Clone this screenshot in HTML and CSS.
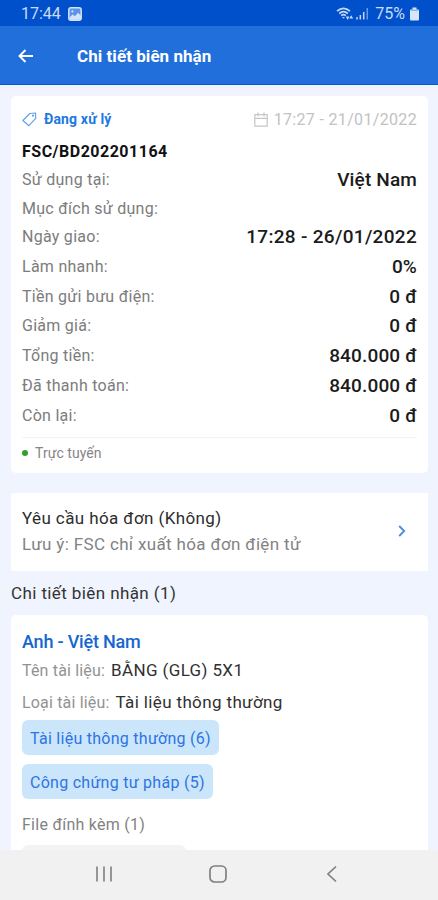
FILE: index.html
```html
<!DOCTYPE html>
<html lang="vi">

<head>
    <meta charset="UTF-8">
    <meta name="viewport" content="width=device-width, initial-scale=1.0">
    <title>Chi tiết biên nhận</title>
    <link rel="stylesheet" href="styles.css">
</head>

<body>
    <div class="screen">
        <div class="statusbar">
            <span class="time">17:44</span>
            <svg class="picture" width="14" height="14" viewBox="0 0 14 14">
                <rect x="0.8" y="0.8" width="12.4" height="12.4" rx="2.2" fill="#5f93e6" stroke="#d3e3fb" stroke-width="1.5" />
                <path d="M1.5 10.5l3.2-3 2.2 1.8 3.2-3.6 3 3.2v2.8q0 1-1 1h-9.6q-1 0-1-1z" fill="#d3e3fb" />
                <circle cx="4.4" cy="4.4" r="1.1" fill="#d3e3fb" />
            </svg>
            <svg class="wifi" width="18" height="14" viewBox="0 0 18 14">
                <g fill="none" stroke="#c3d8f8" stroke-width="1.7">
                    <path d="M1 4.2Q7.5-1.6 14 4.2" />
                    <path d="M3.2 6.5Q7.5 2.8 11.8 6.5" />
                    <path d="M5.2 8.6Q7.5 6.6 9.8 8.6" />
                </g>
                <path d="M6 10l1.5 1.6L9 10zM9.8 9.6h3.6L11.6 13zM13.2 11.500h4L15.200 8.200z" fill="#c3d8f8" />
            </svg>
            <svg class="signal" width="13" height="13" viewBox="0 0 13 13">
                <path d="M1 10v2.5M4.3 8v4.5M7.7 5v7.5" stroke="#c3d8f8" stroke-width="1.5" />
                <path d="M11.3 1v11.5" stroke="#6d9be8" stroke-width="1.5" />
            </svg>
            <span class="percent">75%</span>
            <svg class="battery" width="9" height="14" viewBox="0 0 9 14">
                <path d="M2.5 0.5h4v2H8q1 0 1 1V12.5q0 1-1 1H1q-1 0-1-1V3.500q0-1 1-1h1.500z" fill="#d8e6fc" />
                <path d="M1 2.500h7v1.500H1z" fill="#8fb2ee" />
            </svg>
        </div>

        <div class="header">
            <svg width="16" height="14" viewBox="0 0 16 14">
                <path d="M15 7H2M7.500 1L1.500 7l6 6" fill="none" stroke="#fff" stroke-width="1.900" />
            </svg>
            <h1>Chi tiết biên nhận</h1>
        </div>

        <div class="content">
            <div class="card receipt">
                <div class="top">
                    <svg width="15" height="15" viewBox="0 0 15 15">
                        <path d="M7.800 1.500L13.500 1l.2 5.300-6.800 7.400L.9 8.500z" fill="none" stroke="#65a2e6" stroke-width="1.200" stroke-linejoin="round" />
                        <circle cx="11" cy="3.700" r="1.100" fill="#65a2e6" />
                    </svg>
                    <span class="status">Đang xử lý</span>
                    <svg class="calendar" width="14" height="15" viewBox="0 0 14 15">
                        <path d="M.8 2.700h12.400v11.500H.8zM.8 6.300h12.400M4 .5v4M10 .5v4" fill="none" stroke="#c6c6c6" stroke-width="1.200" />
                    </svg>
                    <span class="date">17:27 - 21/01/2022</span>
                </div>
                <div class="code">FSC/BD202201164</div>
                <div class="row short"><span>Sử dụng tại:</span><b>Việt Nam</b></div>
                <div class="row short"><span>Mục đích sử dụng:</span></div>
                <div class="row"><span>Ngày giao:</span><b class="numbers">17:28 - 26/01/2022</b></div>
                <div class="row"><span>Làm nhanh:</span><b>0%</b></div>
                <div class="row"><span>Tiền gửi bưu điện:</span><b>0 đ</b></div>
                <div class="row"><span>Giảm giá:</span><b>0 đ</b></div>
                <div class="row"><span>Tổng tiền:</span><b>840.000 đ</b></div>
                <div class="row"><span>Đã thanh toán:</span><b>840.000 đ</b></div>
                <div class="row"><span>Còn lại:</span><b>0 đ</b></div>
                <div class="online"><i class="dot"></i>Trực tuyến</div>
            </div>

            <div class="card invoice">
                <div>
                    <div class="invoice-title">Yêu cầu hóa đơn (Không)</div>
                    <div class="invoice-note">Lưu ý: FSC chỉ xuất hóa đơn điện tử</div>
                </div>
                <svg width="8" height="12" viewBox="0 0 8 12">
                    <path d="M1.200 1l5 5-5 5" fill="none" stroke="#4a8ae0" stroke-width="1.800" />
                </svg>
            </div>

            <h2>Chi tiết biên nhận (1)</h2>

            <div class="card document">
                <div class="doc-title">Anh - Việt Nam</div>
                <div class="doc-line"><span>Tên tài liệu:</span><b>BẰNG (GLG) 5X1</b></div>
                <div class="doc-line"><span>Loại tài liệu:</span><b>Tài liệu thông thường</b></div>
                <div class="tag">Tài liệu thông thường (6)</div>
                <div class="tag">Công chứng tư pháp (5)</div>
                <div class="attach">File đính kèm (1)</div>
                <div class="file"></div>
            </div>
        </div>

        <div class="navbar">
            <svg width="18" height="18" viewBox="0 0 18 18">
                <path d="M2 1.500v15M9 1.500v15M16 1.500v15" stroke="#868686" stroke-width="1.700" />
            </svg>
            <svg width="18" height="18" viewBox="0 0 18 18">
                <rect x="1" y="1" width="16" height="16" rx="4.500" fill="none" stroke="#808080" stroke-width="1.700" />
            </svg>
            <svg width="18" height="18" viewBox="0 0 18 18">
                <path d="M13 1.500L5 9l8 7.500" fill="none" stroke="#808080" stroke-width="1.700" />
            </svg>
        </div>
    </div>
</body>

</html>
```
FILE: styles.css
```css
* {
    box-sizing: border-box;
}

body {
    margin: 0;
    font-family: Roboto, sans-serif;
    background-color: #f0f4fe;
}

svg {
    display: block;
    flex-shrink: 0;
}

.screen {
    display: flex;
    flex-direction: column;
    width: 438px;
    height: 900px;
    overflow: hidden;
}

.statusbar {
    display: flex;
    align-items: center;
    flex-shrink: 0;
    height: 26px;
    padding: 1px 19px 0 21px;
    background-color: #0050cb;
    color: #c8dbf9;
    font-size: 16px;
}

.picture {
    margin-left: 7px;
}

.wifi {
    margin-left: auto;
}

.signal {
    margin: 0 6px 0 2px;
}

.battery {
    margin-left: 5px;
}

.header {
    display: flex;
    align-items: center;
    flex-shrink: 0;
    height: 59px;
    padding: 1px 18px 0;
    background-color: #216fdb;
    border-bottom: 1px solid #0c57c8;
}

.header h1 {
    margin: 0 0 0 43px;
    color: #fff;
    font-size: 17px;
    font-weight: 700;
    line-height: 20px;
    letter-spacing: 0.05px;
}

.content {
    flex: 1;
    min-height: 0;
    padding: 11px 10px 0 11px;
    overflow: hidden;
}

.card {
    background-color: #fff;
    border-radius: 5px;
    padding: 0 11px;
}

.receipt {
    height: 377px;
    padding-top: 10px;
}

.top {
    display: flex;
    align-items: center;
    height: 26px;
}

.status {
    margin-left: 7px;
    color: #1c78e2;
    font-size: 14px;
    font-weight: 700;
    letter-spacing: 0.15px;
}

.calendar {
    margin-left: auto;
}

.date {
    margin-left: 6px;
    color: #c2c2c2;
    font-size: 16px;
    letter-spacing: 0.33px;
}

.code {
    height: 34px;
    color: #111;
    font-size: 16px;
    font-weight: 700;
    line-height: 39px;
    letter-spacing: 0.5px;
}

.row {
    display: flex;
    justify-content: space-between;
    height: 29.8px;
    color: #7c7c7c;
    font-size: 16px;
    line-height: 28px;
    letter-spacing: 0.27px;
}

.row.short {
    height: 28.5px;
}

.row b {
    color: #1b1b1b;
    font-size: 19px;
    font-weight: 500;
    letter-spacing: 0.15px;
}

.row .numbers {
    letter-spacing: 0.3px;
}

.online {
    display: flex;
    align-items: center;
    height: 31px;
    margin-top: 5px;
    border-top: 1px solid #f3f3f3;
    color: #858585;
    font-size: 14px;
    letter-spacing: 0.05px;
}

.dot {
    width: 6px;
    height: 6px;
    margin-right: 7px;
    border-radius: 50%;
    background-color: #2ba32b;
}

.invoice {
    display: flex;
    align-items: center;
    justify-content: space-between;
    height: 78px;
    margin-top: 20px;
    padding: 0 22px 2px 11px;
    border-radius: 2px;
}

.invoice-title {
    color: #2c2c2c;
    font-size: 17px;
    line-height: 26px;
    letter-spacing: 0.4px;
}

.invoice-note {
    color: #828282;
    font-size: 17px;
    line-height: 26px;
    letter-spacing: 0.35px;
}

h2 {
    margin: 0;
    height: 44px;
    color: #333;
    font-size: 17px;
    font-weight: 400;
    line-height: 45px;
    letter-spacing: 0.4px;
}

.document {
    height: 260px;
    padding-top: 13px;
}

.doc-title {
    color: #1566cf;
    font-size: 18px;
    font-weight: 500;
    line-height: 28px;
    letter-spacing: -0.2px;
}

.doc-line {
    height: 32px;
    color: #929292;
    font-size: 16px;
    line-height: 29px;
    letter-spacing: 0.17px;
}

.doc-line b {
    margin-left: 6px;
    color: #303030;
    font-size: 17px;
    font-weight: 400;
    letter-spacing: 0.37px;
}

.tag {
    width: fit-content;
    height: 35px;
    margin-bottom: 9px;
    padding: 0 8px;
    border-radius: 6px;
    background-color: #cbe6fb;
    color: #2d74e4;
    font-size: 16px;
    line-height: 38px;
    letter-spacing: 0.27px;
}

.attach {
    height: 37px;
    color: #828282;
    font-size: 16px;
    line-height: 34px;
    letter-spacing: 0.26px;
}

.file {
    width: 164px;
    height: 30px;
    border-radius: 6px;
    background-color: #f3f3f3;
}

.navbar {
    display: flex;
    align-items: center;
    flex-shrink: 0;
    gap: 96px;
    height: 50px;
    padding: 0 0 2px 95px;
    background-color: #f1f1f1;
}
```
